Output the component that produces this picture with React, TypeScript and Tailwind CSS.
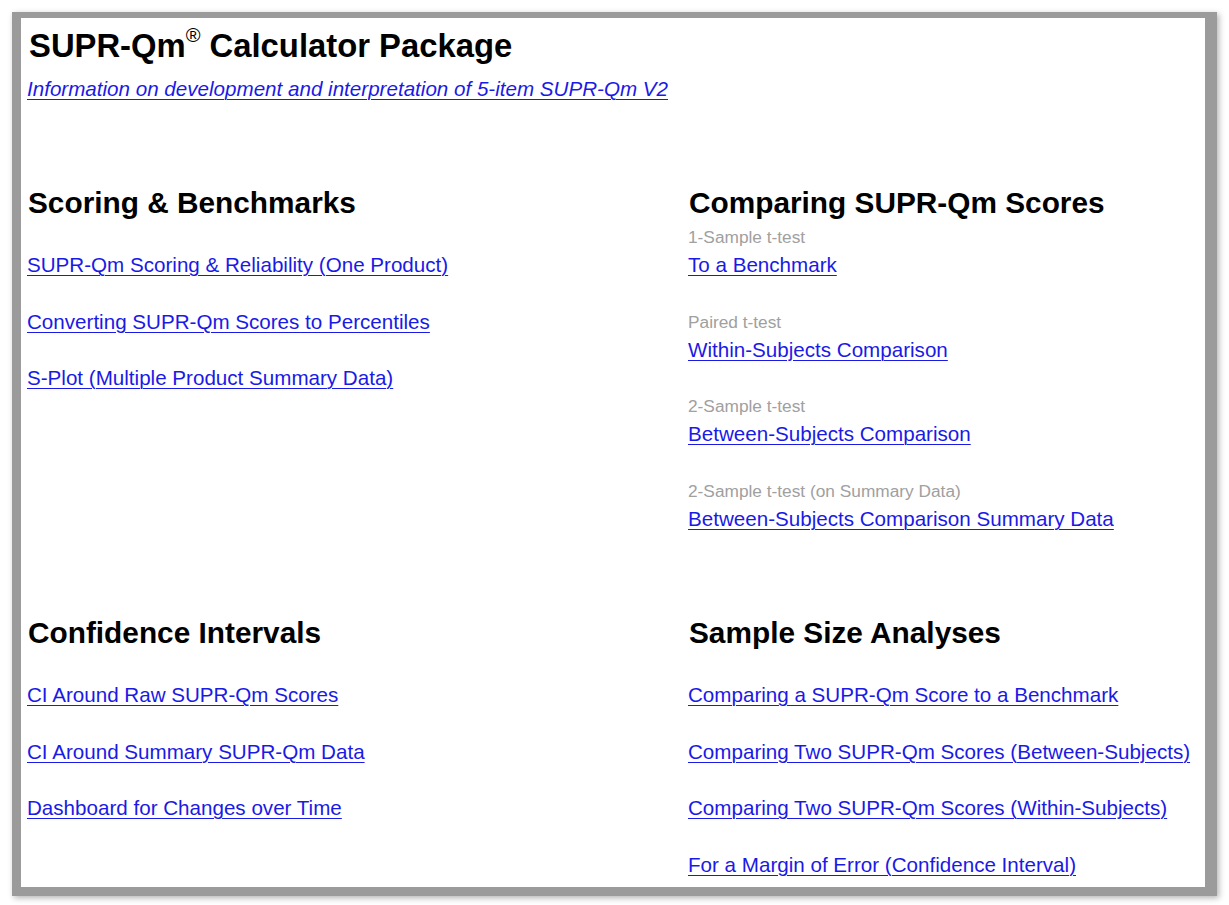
const LINK = 'text-[#1a1ae6] underline decoration-1 underline-offset-[3px]'

function Header({ children }: { children: React.ReactNode }) {
  return <h2 className="ml-px text-[29.8px] font-bold leading-[34px] text-black">{children}</h2>
}

function PlainLinks({ items }: { items: string[] }) {
  return (
    <div className="mt-[31px] flex flex-col gap-[28.5px]">
      {items.map((t) => (
        <div key={t} className="text-[20.6px] leading-[28px]">
          <a href="#" className={LINK}>
            {t}
          </a>
        </div>
      ))}
    </div>
  )
}

function TestLinks({ items }: { items: { label: string; link: string }[] }) {
  return (
    <div className="mt-[3px] flex flex-col gap-[28.7px]">
      {items.map((it) => (
        <div key={it.link} className="flex flex-col">
          <span className="text-[17.3px] leading-[28px] text-[#a0a0a0]">{it.label}</span>
          <div className="text-[20.6px] leading-[28px]">
            <a href="#" className={LINK}>
              {it.link}
            </a>
          </div>
        </div>
      ))}
    </div>
  )
}

export default function App() {
  return (
    <div className="h-[905px] w-[1229px] bg-white pl-[12px] pt-[12px] font-['Liberation_Sans',Arial,sans-serif]">
      <div className="h-[884px] w-[1205px] border-b-[9px] border-l-[9px] border-r-[12px] border-t-[6px] border-[#9b9b9b] bg-white pl-[6px] pt-[8px] shadow-[2px_2px_6px_rgba(0,0,0,0.3)]">
        <h1 className="ml-[2px] text-[32.8px] font-bold leading-[40px] text-black">
          SUPR-Qm
          <sup className="relative -top-[15px] text-[20px] font-normal">®</sup> Calculator Package
        </h1>
        <div className="mt-[11px] text-[20.6px] leading-[24px]">
          <a href="#" className={`${LINK} italic`}>
            Information on development and interpretation of 5-item SUPR-Qm V2
          </a>
        </div>

        <div className="mt-[85px] grid grid-cols-[661px_1fr] grid-rows-[430px_auto]">
          <section>
            <Header>Scoring &amp; Benchmarks</Header>
            <PlainLinks
              items={[
                'SUPR-Qm Scoring & Reliability (One Product)',
                'Converting SUPR-Qm Scores to Percentiles',
                'S-Plot (Multiple Product Summary Data)',
              ]}
            />
          </section>
          <section>
            <Header>Comparing SUPR-Qm Scores</Header>
            <TestLinks
              items={[
                { label: '1-Sample t-test', link: 'To a Benchmark' },
                { label: 'Paired t-test', link: 'Within-Subjects Comparison' },
                { label: '2-Sample t-test', link: 'Between-Subjects Comparison' },
                { label: '2-Sample t-test (on Summary Data)', link: 'Between-Subjects Comparison Summary Data' },
              ]}
            />
          </section>
          <section>
            <Header>Confidence Intervals</Header>
            <PlainLinks
              items={['CI Around Raw SUPR-Qm Scores', 'CI Around Summary SUPR-Qm Data', 'Dashboard for Changes over Time']}
            />
          </section>
          <section>
            <Header>Sample Size Analyses</Header>
            <PlainLinks
              items={[
                'Comparing a SUPR-Qm Score to a Benchmark',
                'Comparing Two SUPR-Qm Scores (Between-Subjects)',
                'Comparing Two SUPR-Qm Scores (Within-Subjects)',
                'For a Margin of Error (Confidence Interval)',
              ]}
            />
          </section>
        </div>
      </div>
    </div>
  )
}
